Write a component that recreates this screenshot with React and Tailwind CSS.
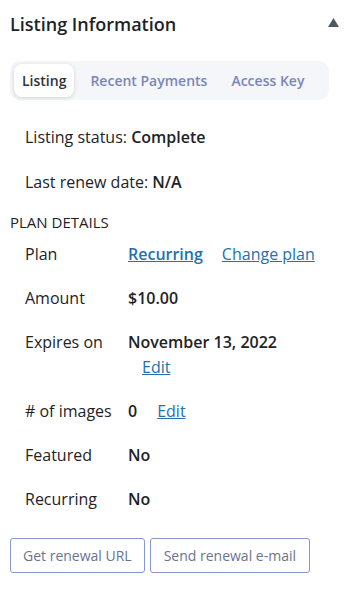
import React, { useState } from 'react';

const Row = ({ label, children, className = '' }) => (
  <div className={`flex items-start ${className}`}>
    <div className="w-[103px] shrink-0 text-[#1d2327]">{label}</div>
    <div className="flex-1">{children}</div>
  </div>
);

const App = () => {
  const [tab, setTab] = useState('listing');
  const tabs = [
    { id: 'listing', label: 'Listing' },
    { id: 'payments', label: 'Recent Payments' },
    { id: 'key', label: 'Access Key' },
  ];

  return (
    <div
      className="min-h-screen w-[359px] bg-white text-[#1d2327] text-[16px]"
      style={{ fontFamily: '"Open Sans", "Liberation Sans", sans-serif' }}
    >
      {/* Header */}
      <div className="flex items-center justify-between pl-[10px] pr-[20px] pt-[10px]">
        <h2 className="text-[18px] font-semibold leading-[28px] text-[#1d2327]">Listing Information</h2>
        <svg width="11" height="9" viewBox="0 0 11 9" className="mb-[4px]">
          <path d="M5.5 0 L11 9 L0 9 Z" fill="#50575e" />
        </svg>
      </div>

      <div className="px-[10px] pt-[23px]">
        {/* Tabs */}
        <div className="flex items-center gap-[8px] w-[319px] rounded-[10px] bg-[#f5f6fa] p-[3px] pl-[4px]">
          {tabs.map((t) => (
            <button
              key={t.id}
              onClick={() => setTab(t.id)}
              className={`h-[33px] px-[8px] rounded-[8px] text-[14px] font-semibold ${
                tab === t.id
                  ? 'bg-white text-[#2c3338] shadow-[0_1px_4px_rgba(0,0,0,0.15)]'
                  : 'text-[#7a86b9]'
              }`}
            >
              {t.label}
            </button>
          ))}
        </div>

        {/* Status */}
        <div className="pl-[15px] pt-[26px]">
          <p className="leading-[22px]">
            Listing status: <span className="font-semibold">Complete</span>
          </p>
          <p className="leading-[22px] mt-[23px]">
            Last renew date: <span className="font-semibold">N/A</span>
          </p>
        </div>

        <h3 className="mt-[19px] text-[15px] font-medium uppercase leading-[20px]">Plan Details</h3>

        <div className="pl-[15px] mt-[11px] flex flex-col gap-[22px] leading-[22px]">
          <Row label="Plan">
            <a href="#" className="font-semibold text-[#2271b1] underline">Recurring</a>
            <a href="#" className="ml-[19px] text-[#2271b1] underline">Change plan</a>
          </Row>
          <Row label="Amount">
            <span className="font-semibold">$10.00</span>
          </Row>
          <Row label="Expires on">
            <div className="font-semibold">November 13, 2022</div>
            <a href="#" className="ml-[14px] mt-[3px] inline-block text-[#2271b1] underline">Edit</a>
          </Row>
          <Row label="# of images">
            <span className="font-semibold">0</span>
            <a href="#" className="ml-[20px] text-[#2271b1] underline">Edit</a>
          </Row>
          <Row label="Featured">
            <span className="font-semibold">No</span>
          </Row>
          <Row label="Recurring">
            <span className="font-semibold">No</span>
          </Row>
        </div>

        {/* Actions */}
        <div className="flex gap-[5px] mt-[28px]">
          <button className="h-[35px] px-[12px] rounded-[3px] border border-[#8597cc] text-[14px] text-[#6b7391]">
            Get renewal URL
          </button>
          <button className="h-[35px] px-[13px] rounded-[3px] border border-[#8597cc] text-[14px] text-[#6b7391]">
            Send renewal e-mail
          </button>
        </div>
      </div>
    </div>
  );
};

export default App;
